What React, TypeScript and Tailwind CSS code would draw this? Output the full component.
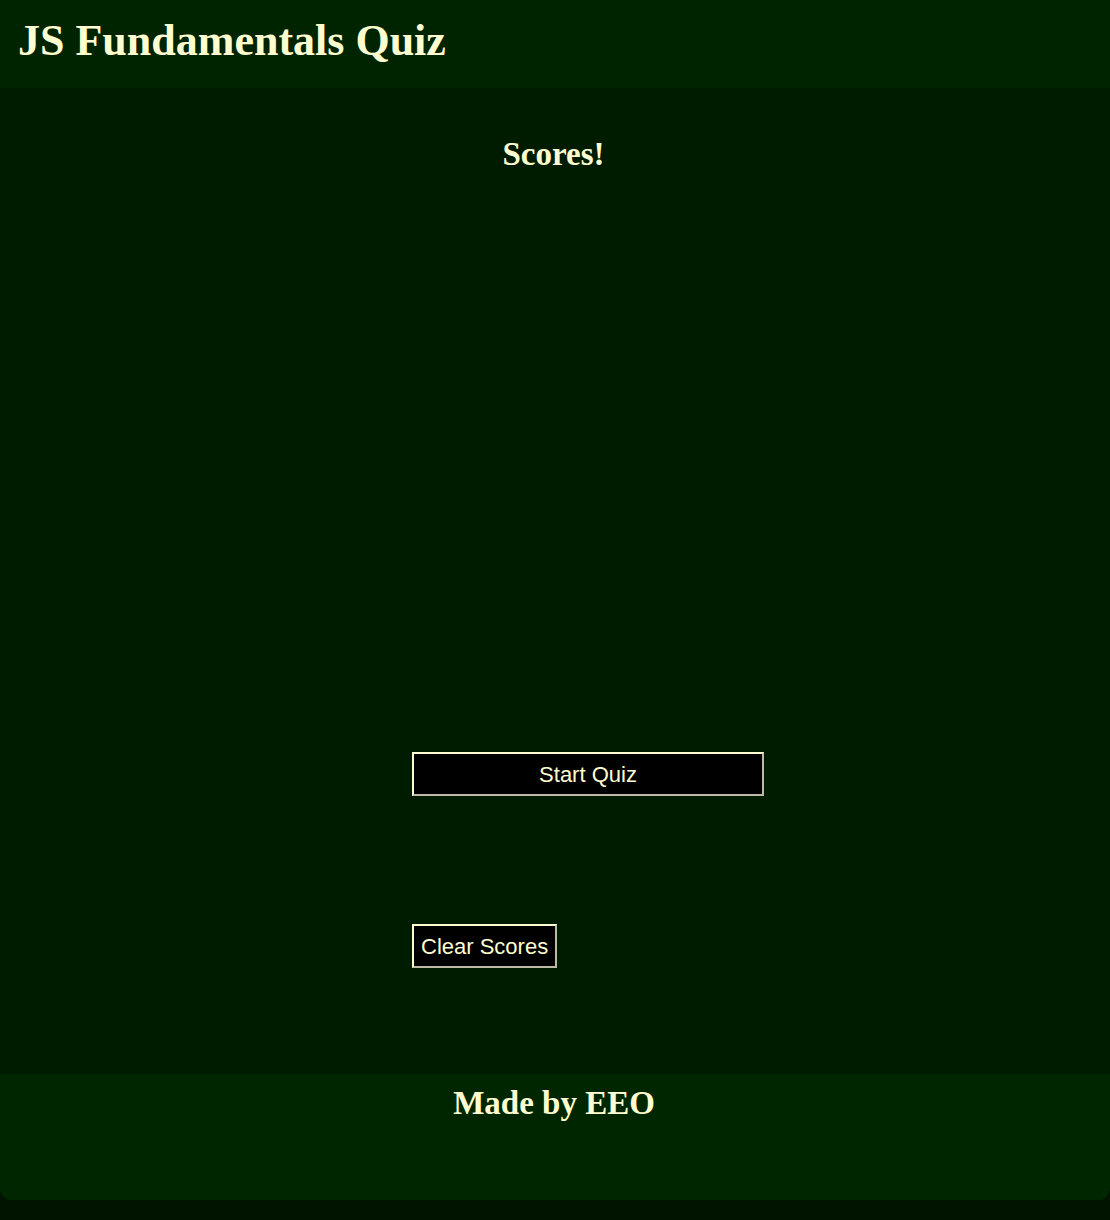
export default function App() {
  return (
    <div className="min-h-[1220px] bg-[#001400] text-[#fffdd0]">
      <header className="h-[88px] bg-[#002400] px-[18px] pt-[16px]">
        <h1 className="font-['Liberation_Serif',serif] font-bold text-[44px] leading-[50px]">
          JS Fundamentals Quiz
        </h1>
      </header>

      <main className="h-[986px] bg-[#001c00] flex flex-col">
        <h2 className="font-['Liberation_Serif',serif] font-bold text-[33px] text-center mt-[46px] leading-[40px] pr-[3px]">
          Scores!
        </h2>
        <div className="ml-[412px] mt-[578px] flex flex-col items-start gap-[128px] font-['Liberation_Sans',sans-serif] text-[22px]">
          <button className="w-[352px] h-[44px] bg-black border-2 border-solid border-t-[#fffdd0] border-l-[#fffdd0] border-b-[#bdbba5] border-r-[#bdbba5]">
            Start Quiz
          </button>
          <button className="h-[44px] px-[7px] bg-black border-2 border-solid border-t-[#fffdd0] border-l-[#fffdd0] border-b-[#bdbba5] border-r-[#bdbba5]">
            Clear Scores
          </button>
        </div>
      </main>

      <footer className="h-[126px] bg-[#002600] rounded-b-[12px] flex justify-center">
        <h2 className="font-['Liberation_Serif',serif] font-bold text-[33px] mt-[9px] leading-[40px] pr-[2px]">
          Made by EEO
        </h2>
      </footer>
    </div>
  );
}
